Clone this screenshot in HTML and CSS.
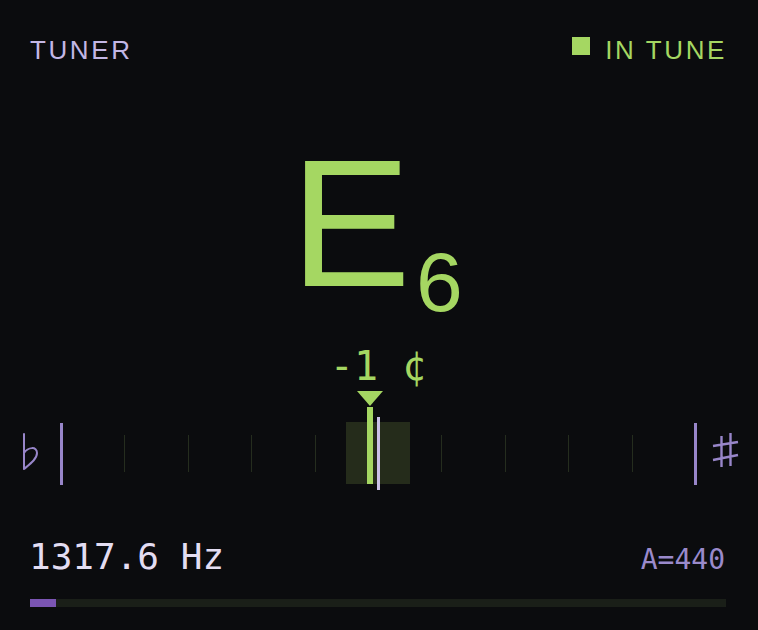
FILE: index.html
```html
<!DOCTYPE html>
<html lang="en">
<head>
<meta charset="utf-8">
<title>Tuner</title>
<link rel="stylesheet" href="styles.css">
</head>
<body>
<main class="tuner">
  <header class="top">
    <span class="title">TUNER</span>
    <span class="status"><span class="status-dot"></span><span class="status-text">IN TUNE</span></span>
  </header>

  <section class="note">
    <span class="note-name">E</span><span class="note-oct">6</span>
  </section>

  <div class="cents">-1 ¢</div>

  <section class="meter">
    <div class="meter-side meter-flat">
      <svg width="18" height="38" viewBox="0 0 18 38" aria-label="flat">
        <path d="M2 1 V36 M2 20 C6 14 15 13 15 20 C15 26 8 31 2 36" fill="none" stroke="#9886c9" stroke-width="2" stroke-linecap="round" stroke-linejoin="round"/>
      </svg>
    </div>
    <div class="meter-track">
      <div class="zone"></div>
      <div class="ticks">
        <span class="tick major"></span>
        <span class="tick"></span>
        <span class="tick"></span>
        <span class="tick"></span>
        <span class="tick"></span>
        <span class="tick center"></span>
        <span class="tick"></span>
        <span class="tick"></span>
        <span class="tick"></span>
        <span class="tick"></span>
        <span class="tick major"></span>
      </div>
      <div class="needle"><span class="needle-head"></span><span class="needle-bar"></span></div>
    </div>
    <div class="meter-side meter-sharp">
      <svg width="28" height="38" viewBox="0 0 28 38" aria-label="sharp">
        <path d="M9.5 4 V35 M18.5 1 V34 M1 14 L26 10 M1 28 L26 23" fill="none" stroke="#9886c9" stroke-width="2.4" stroke-linecap="butt"/>
      </svg>
    </div>
  </section>

  <footer class="bottom">
    <span class="freq">1317.6 Hz</span>
    <span class="ref">A=440</span>
  </footer>

  <div class="level"><div class="level-fill" style="width: 3.7%"></div></div>
</main>
</body>
</html>
```

FILE: styles.css
```css
html, body {
  margin: 0;
  padding: 0;
  background: #0b0c0e;
}

body {
  width: 758px;
  height: 630px;
  overflow: hidden;
  font-family: "Liberation Sans", Arial, sans-serif;
}

.tuner {
  box-sizing: border-box;
  width: 758px;
  height: 630px;
  padding: 35px 32px 0 30px;
  display: flex;
  flex-direction: column;
}

.top {
  height: 30px;
  display: flex;
  justify-content: space-between;
  align-items: flex-start;
  font-size: 26px;
  line-height: 30px;
  letter-spacing: 0.1em;
}

.title {
  color: #c3b7e5;
}

.status {
  display: flex;
  align-items: flex-start;
  color: #a5d762;
}

.status-dot {
  width: 18px;
  height: 18px;
  margin-top: 2px;
  margin-right: 15px;
  background: #a5d762;
}

.status-text {
  margin-right: -1px;
}

.note {
  margin-top: 67px;
  height: 183px;
  line-height: 183px;
  text-align: center;
  color: #a5d762;
  white-space: nowrap;
  padding-right: 3px;
}

.note-name {
  font-size: 181px;
}

.note-oct {
  font-size: 84px;
  line-height: 84px;
  margin-left: 5px;
  vertical-align: -25px;
}

.cents {
  margin-top: 31px;
  height: 40px;
  font-family: "DejaVu Sans Mono", monospace;
  font-size: 40px;
  line-height: 40px;
  text-align: center;
  color: #a5d762;
  white-space: pre;
}

.meter {
  margin: 4px -32px 0 -30px;
  padding-top: 27px;
  display: grid;
  grid-template-columns: 60px 637px 1fr;
  height: 73px;
}

.meter-side {
  display: flex;
  align-items: center;
}

.meter-flat svg {
  margin-left: 22px;
  margin-top: -3px;
}

.meter-sharp svg {
  margin-left: 15px;
  margin-top: -5px;
}

.meter-track {
  position: relative;
  height: 73px;
}

.ticks {
  position: relative;
  height: 73px;
  display: flex;
  justify-content: space-between;
  align-items: center;
}

.tick {
  width: 3px;
  height: 37px;
  display: flex;
  justify-content: center;
}

.tick::before {
  content: "";
  width: 1px;
  height: 100%;
  background: #252d1e;
}

.tick.major {
  height: 62px;
}

.tick.major::before {
  width: 3px;
  background: #9886c9;
}

.tick.center {
  height: 73px;
}

.tick.center::before {
  width: 3px;
  background: #cbc1e8;
}

.zone {
  position: absolute;
  left: 286px;
  top: 5px;
  width: 64px;
  height: 62px;
  background: #252c1b;
}

.needle {
  position: absolute;
  left: 297px;
  top: -26px;
  width: 26px;
  height: 93px;
  display: flex;
  flex-direction: column;
  align-items: center;
}

.needle-head {
  width: 0;
  height: 0;
  border-left: 13px solid transparent;
  border-right: 13px solid transparent;
  border-top: 15px solid #a5d762;
}

.needle-bar {
  margin-top: 1px;
  width: 6px;
  height: 77px;
  background: #a5d762;
}

.bottom {
  margin-top: 47px;
  height: 40px;
  display: flex;
  justify-content: space-between;
  align-items: baseline;
  font-family: "DejaVu Sans Mono", monospace;
  line-height: 40px;
}

.freq {
  font-size: 36px;
  color: #e3ddf2;
  margin-left: -1px;
}

.ref {
  font-size: 28px;
  color: #9a8acb;
  margin-right: 1px;
}

.level {
  margin-top: 22px;
  height: 8px;
  background: #1a1f18;
}

.level-fill {
  height: 100%;
  background: #7b55b3;
}
```
